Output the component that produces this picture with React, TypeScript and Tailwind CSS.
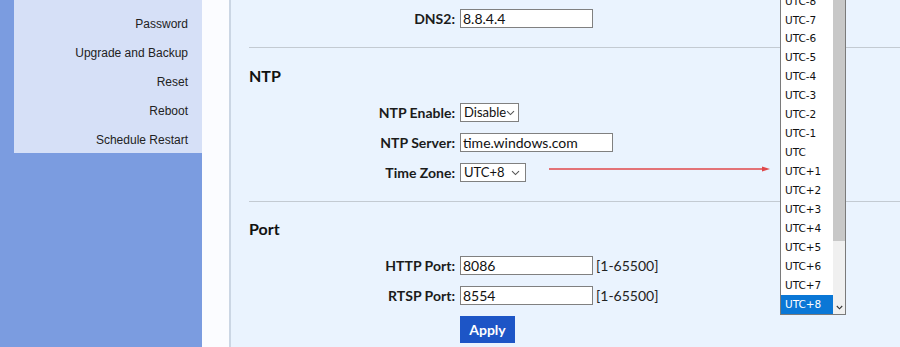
const menu = ['Password', 'Upgrade and Backup', 'Reset', 'Reboot', 'Schedule Restart'];

const zones = [
  'UTC-8', 'UTC-7', 'UTC-6', 'UTC-5', 'UTC-4', 'UTC-3', 'UTC-2', 'UTC-1', 'UTC',
  'UTC+1', 'UTC+2', 'UTC+3', 'UTC+4', 'UTC+5', 'UTC+6', 'UTC+7', 'UTC+8'
];

const uiFont = "font-['Lato','Open_Sans',sans-serif]";

function Chevron() {
  return (
    <svg width="9" height="6" viewBox="0 0 9 6" className="shrink-0">
      <path d="M1 1.2 L4.5 4.6 L8 1.2" fill="none" stroke="#555" strokeWidth="1.1" />
    </svg>
  );
}

function Row({ label, children }: { label: string; children: React.ReactNode }) {
  return (
    <div className="flex h-[19px] items-center">
      <div className={`w-[211px] pr-[5px] text-right text-[14px] font-bold text-[#1b1b1b] ${uiFont}`}>{label}</div>
      {children}
    </div>
  );
}

function TextBox({ value, w }: { value: string; w: string }) {
  return (
    <div className={`flex h-[19px] items-center border border-[#808080] bg-white pl-[2px] text-[14px] text-[#111] ${uiFont} ${w}`}>
      {value}
    </div>
  );
}

function SelectBox({ value, w }: { value: string; w: string }) {
  return (
    <div className={`flex h-[19px] items-center justify-between border border-[#808080] bg-white pl-[3px] pr-[5px] text-[13px] text-[#111] ${uiFont} ${w}`}>
      <span>{value}</span>
      <Chevron />
    </div>
  );
}

export default function App() {
  return (
    <div className="relative flex h-[347px] w-[900px] overflow-hidden bg-white font-['Liberation_Sans',Arial,sans-serif]">
      {/* left nav */}
      <div className="w-[202px] shrink-0 bg-[#7b9ce0]">
        <div className="ml-[14px] flex h-[153px] flex-col items-end gap-[14px] bg-[#d6e0f7] pr-[14px] pt-[17px] text-[12px] leading-[15px] text-[#222]">
          {menu.map((m) => (
            <div key={m}>{m}</div>
          ))}
        </div>
      </div>

      <div className="w-[27px] shrink-0 bg-[#fbfcff]" />

      {/* content */}
      <div className="flex-1 border-l-2 border-[#cbd6e4] bg-[#eaf3fe] pl-[18px]">
        <div className="pt-[9px]">
          <Row label="DNS2:">
            <TextBox value="8.8.4.4" w="w-[133px]" />
          </Row>
        </div>

        <div className="mt-[19px] h-px bg-[#c3cad2]" />

        <div className={`mt-[17px] text-[16px] font-bold leading-[22px] text-[#111] ${uiFont}`}>NTP</div>

        <div className="mt-[16px] flex flex-col gap-[11px]">
          <Row label="NTP Enable:">
            <SelectBox value="Disable" w="w-[59px]" />
          </Row>
          <Row label="NTP Server:">
            <TextBox value="time.windows.com" w="w-[153px]" />
          </Row>
          <Row label="Time Zone:">
            <SelectBox value="UTC+8" w="w-[66px]" />
          </Row>
        </div>

        <div className="mt-[19px] h-px bg-[#c3cad2]" />

        <div className={`mt-[16px] text-[16px] font-bold leading-[22px] text-[#111] ${uiFont}`}>Port</div>

        <div className="mt-[16px] flex flex-col gap-[11px]">
          <Row label="HTTP Port:">
            <TextBox value="8086" w="w-[133px]" />
            <span className={`ml-[3px] text-[14px] text-[#222] ${uiFont}`}>[1-65500]</span>
          </Row>
          <Row label="RTSP Port:">
            <TextBox value="8554" w="w-[133px]" />
            <span className={`ml-[3px] text-[14px] text-[#222] ${uiFont}`}>[1-65500]</span>
          </Row>
        </div>

        <div className="mt-[11px] pl-[211px]">
          <button className={`h-[27px] w-[55px] bg-[#1d55c6] text-[14px] font-bold text-white ${uiFont}`}>Apply</button>
        </div>
      </div>

      {/* red arrow annotation */}
      <svg className="absolute left-[548px] top-[164px]" width="224" height="10" viewBox="0 0 224 10">
        <line x1="1" y1="5" x2="216" y2="5" stroke="#e0474a" strokeWidth="1.3" />
        <path d="M214 2.5 L222 5 L214 7.5 Z" fill="#e0474a" />
      </svg>

      {/* open dropdown list */}
      <div className="absolute left-[780px] top-[-9px] flex h-[324px] w-[66px] border border-[#7a7a7a] bg-white font-['DejaVu_Sans',Tahoma,sans-serif]">
        <div className="flex flex-1 flex-col">
          {zones.map((z) => (
            <div
              key={z}
              className={`flex h-[19px] items-center pl-[4px] text-[10.5px] ${z === 'UTC+8' ? 'bg-[#0a77d6] text-white' : 'text-[#111]'}`}
            >
              {z}
            </div>
          ))}
        </div>
        <div className="flex w-[12px] flex-col bg-[#f0f0f0]">
          <div className="h-[249px] bg-[#c8c8c8]" />
          <div className="flex-1" />
          <div className="flex h-[14px] items-center justify-center">
            <svg width="7" height="5" viewBox="0 0 7 5">
              <path d="M0.8 1 L3.5 3.8 L6.2 1" fill="none" stroke="#333" strokeWidth="1.1" />
            </svg>
          </div>
        </div>
      </div>
    </div>
  );
}
